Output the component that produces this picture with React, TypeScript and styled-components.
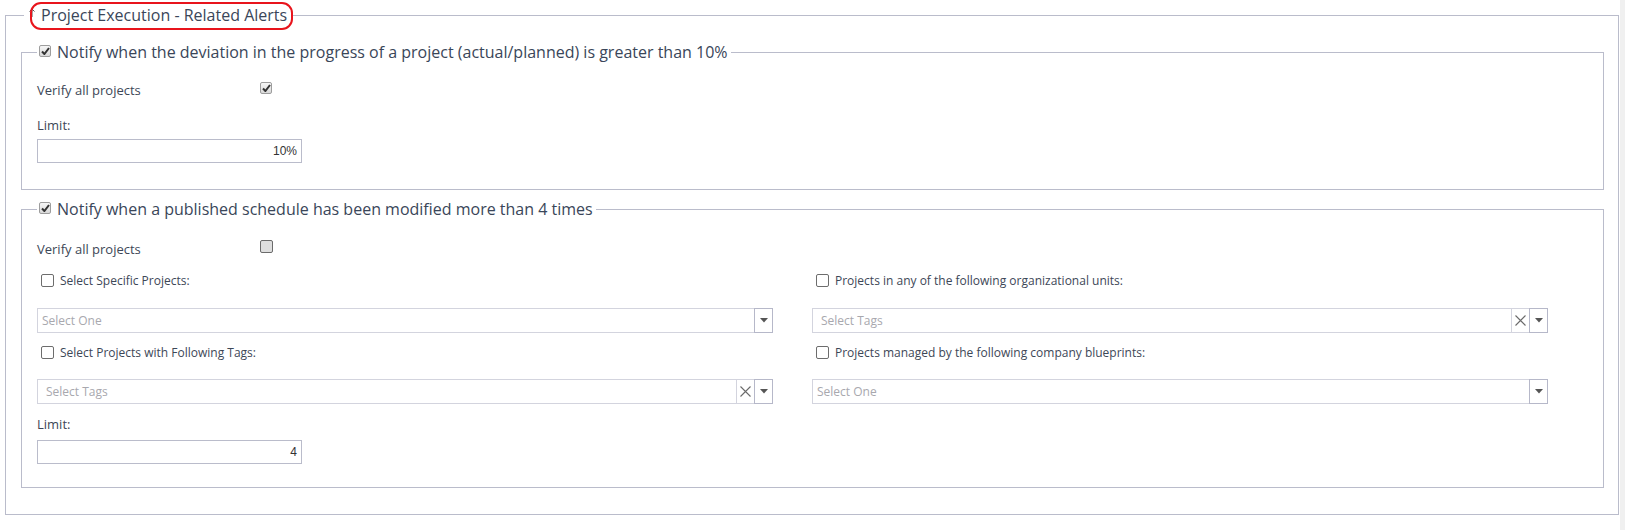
import React from "react";
import styled, { createGlobalStyle } from "styled-components";

const GlobalStyle = createGlobalStyle`
  body {
    margin: 0;
    background: #fff;
    font-family: "Open Sans", "Noto Sans", sans-serif;
    color: #3d4757;
  }
`;

const borderColor = "#babccb";
const fieldBorder = "#d3d4de";

const Page = styled.div`
  display: flex;
  width: 1625px;
  height: 530px;
  overflow: hidden;
`;

const Main = styled.div`
  flex: 1;
  padding: 4px 1px 0 5px;
`;

const ScrollEdge = styled.div`
  width: 5px;
  background: #f0f0f0;
`;

const Section = styled.fieldset`
  margin: 0;
  padding: 0 14px 26px 15px;
  border: 1px solid ${borderColor};
  min-width: 0;
`;

const SectionLegend = styled.legend`
  position: relative;
  margin-left: 3px;
  padding: 0 6px 0 5px;
  display: flex;
  align-items: center;
  height: 22px;
  font-size: 16px;
  color: #3a4659;
`;

const Highlight = styled.span`
  position: absolute;
  left: 6px;
  right: 0;
  top: -2px;
  bottom: -4px;
  border: 2px solid #e8141c;
  border-radius: 11px;
  pointer-events: none;
`;

const Collapse = styled.svg`
  width: 6px;
  height: 9px;
  margin: -6px 6px 0 0;
`;

const Group = styled.fieldset<{ $top: number; $bottom: number }>`
  margin: ${(p) => p.$top}px 0 0;
  padding: 0 15px ${(p) => p.$bottom}px 15px;
  border: 1px solid ${borderColor};
  min-width: 0;
`;

const GroupLegend = styled.legend`
  padding: 0 3px 0 2px;
  display: flex;
  height: 22px;
  line-height: 22px;
  font-size: 16px;
  color: #3a4659;
`;

const MiniCheck = styled.span<{ $top: number }>`
  width: 10px;
  height: 10px;
  margin: ${(p) => p.$top}px 6px 0 0;
  border: 1px solid #9d9d9d;
  border-radius: 2px;
  background: linear-gradient(#f6f6f6, #d9d9d9);
  display: flex;
  align-items: center;
  justify-content: center;
`;

const VerifyRow = styled.div<{ $top: number }>`
  display: flex;
  align-items: center;
  height: 20px;
  margin-top: ${(p) => p.$top}px;
`;

const VerifyLabel = styled.div`
  width: 223px;
  font-size: 13px;
`;

const GreyBox = styled.span`
  width: 11px;
  height: 11px;
  margin-top: -5px;
  border: 1.5px solid #6b6b6b;
  border-radius: 2px;
  background: #dedede;
`;

const LimitLabel = styled.div<{ $top: number }>`
  margin-top: ${(p) => p.$top}px;
  height: 18px;
  line-height: 18px;
  font-size: 13px;
`;

const NumberInput = styled.div<{ $top: number }>`
  box-sizing: border-box;
  width: 265px;
  height: 24px;
  margin-top: ${(p) => p.$top}px;
  padding-right: 4px;
  border: 1px solid ${borderColor};
  font-family: "Liberation Sans", Arial, sans-serif;
  font-size: 12px;
  line-height: 22px;
  text-align: right;
  color: #333;
`;

const Grid = styled.div`
  display: grid;
  grid-template-columns: 736px 736px;
  column-gap: 39px;
`;

const CheckRow = styled.label<{ $top: number }>`
  display: flex;
  align-items: center;
  gap: 6px;
  height: 20px;
  margin-top: ${(p) => p.$top}px;
  padding-left: 4px;
  font-size: 12px;
`;

const PlainBox = styled.span`
  box-sizing: border-box;
  width: 13px;
  height: 13px;
  border: 1.5px solid #6d6d6d;
  border-radius: 2px;
  background: #fff;
`;

const SelectBox = styled.div<{ $top: number }>`
  box-sizing: border-box;
  display: flex;
  height: 25px;
  margin-top: ${(p) => p.$top}px;
  border: 1px solid ${fieldBorder};
  background: #fff;
`;

const SelectText = styled.div<{ $indent: number }>`
  flex: 1;
  padding-left: ${(p) => p.$indent}px;
  font-size: 12px;
  line-height: 23px;
  color: #a8a8ae;
`;

const ClearButton = styled.div`
  width: 17px;
  border-left: 1px solid ${fieldBorder};
  display: flex;
  align-items: center;
  justify-content: center;
`;

const ArrowButton = styled.div`
  width: 17px;
  margin: -1px -1px -1px 0;
  border: 1px solid #b6b8c9;
  display: flex;
  align-items: center;
  justify-content: center;
`;

const Tick = () => (
  <svg width="9" height="8" viewBox="0 0 9 8">
    <path d="M1 4.5 L3.4 7 L8 1" fill="none" stroke="#333" strokeWidth="2" />
  </svg>
);

const Select = ({
  top,
  text,
  indent,
  clearable,
}: {
  top: number;
  text: string;
  indent: number;
  clearable?: boolean;
}) => (
  <SelectBox $top={top}>
    <SelectText $indent={indent}>{text}</SelectText>
    {clearable && (
      <ClearButton>
        <svg width="11" height="11" viewBox="0 0 11 11">
          <path d="M0.5 0.5 L10.5 10.5 M10.5 0.5 L0.5 10.5" stroke="#6a6a6a" strokeWidth="1.1" />
        </svg>
      </ClearButton>
    )}
    <ArrowButton>
      <svg width="8" height="5" viewBox="0 0 8 5">
        <path d="M0 0 H8 L4 4.5 Z" fill="#555" />
      </svg>
    </ArrowButton>
  </SelectBox>
);

const App = () => (
  <Page>
    <GlobalStyle />
    <Main>
      <Section>
        <SectionLegend>
          <Collapse viewBox="0 0 6 9">
            <path d="M3 9 V1 M0.5 3.5 L3 1 L5.5 3.5" fill="none" stroke="#555" strokeWidth="1" />
          </Collapse>
          Project Execution - Related Alerts
          <Highlight />
        </SectionLegend>

        <Group $top={15} $bottom={26}>
          <GroupLegend>
            <MiniCheck $top={4}>
              <Tick />
            </MiniCheck>
            Notify when the deviation in the progress of a project (actual/planned) is greater than 10%
          </GroupLegend>
          <VerifyRow $top={17}>
            <VerifyLabel>Verify all projects</VerifyLabel>
            <MiniCheck $top={-5}>
              <Tick />
            </MiniCheck>
          </VerifyRow>
          <LimitLabel $top={16}>Limit:</LimitLabel>
          <NumberInput $top={5}>10%</NumberInput>
        </Group>

        <Group $top={8} $bottom={23}>
          <GroupLegend>
            <MiniCheck $top={4}>
              <Tick />
            </MiniCheck>
            Notify when a published schedule has been modified more than 4 times
          </GroupLegend>
          <VerifyRow $top={19}>
            <VerifyLabel>Verify all projects</VerifyLabel>
            <GreyBox />
          </VerifyRow>
          <Grid>
            <CheckRow $top={11}>
              <PlainBox />
              Select Specific Projects:
            </CheckRow>
            <CheckRow $top={11}>
              <PlainBox />
              Projects in any of the following organizational units:
            </CheckRow>
            <Select top={18} text="Select One" indent={4} />
            <Select top={18} text="Select Tags" indent={8} clearable />
            <CheckRow $top={9}>
              <PlainBox />
              Select Projects with Following Tags:
            </CheckRow>
            <CheckRow $top={9}>
              <PlainBox />
              Projects managed by the following company blueprints:
            </CheckRow>
            <Select top={17} text="Select Tags" indent={8} clearable />
            <Select top={17} text="Select One" indent={4} />
          </Grid>
          <LimitLabel $top={11}>Limit:</LimitLabel>
          <NumberInput $top={7}>4</NumberInput>
        </Group>
      </Section>
    </Main>
    <ScrollEdge />
  </Page>
);

export default App;
